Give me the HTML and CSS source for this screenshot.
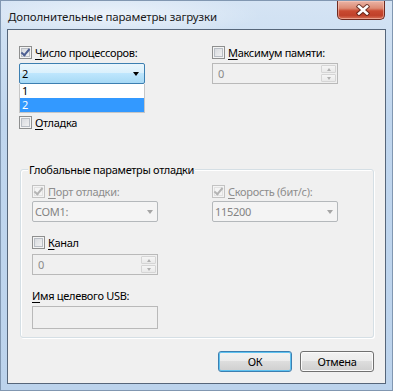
FILE: index.html
```html
<!DOCTYPE html>
<html lang="ru">
<head>
    <meta charset="UTF-8">
    <title>Дополнительные параметры загрузки</title>
    <link rel="stylesheet" href="styles.css">
</head>
<body>

    <div class="window">
        <div class="titlebar">
            <span class="title">Дополнительные параметры загрузки</span>
            <span class="close-btn">
                <svg width="14" height="12" viewBox="0 0 14 12">
                    <path d="M3 2.5 L11 9.5 M11 2.5 L3 9.5" stroke="#4a1a12" stroke-width="4.6" stroke-linecap="square" opacity="0.7"/>
                    <path d="M3 2.5 L11 9.5 M11 2.5 L3 9.5" stroke="#ffffff" stroke-width="2.6" stroke-linecap="square"/>
                </svg>
            </span>
        </div>

        <div class="client">
            <!-- верхняя часть: процессоры и память -->
            <div class="top-grid">
                <div class="col">
                    <label class="check-row">
                        <span class="check checked"></span>
                        <span><u>Ч</u>исло процессоров:</span>
                    </label>
                    <div class="combo-wrap">
                        <div class="combo open">
                            <span>2</span>
                            <span class="arrow"></span>
                        </div>
                        <ul class="droplist">
                            <li>1</li>
                            <li class="selected">2</li>
                        </ul>
                    </div>
                    <label class="check-row debug-row">
                        <span class="check"></span>
                        <span><u>О</u>тладка</span>
                    </label>
                </div>
                <div class="col">
                    <label class="check-row">
                        <span class="check"></span>
                        <span><u>М</u>аксимум памяти:</span>
                    </label>
                    <div class="spinner">
                        <span class="value">0</span>
                        <span class="spin">
                            <span class="spin-btn"><span class="tri up"></span></span>
                            <span class="spin-btn"><span class="tri down"></span></span>
                        </span>
                    </div>
                </div>
            </div>

            <!-- глобальные параметры отладки -->
            <div class="group">
                <span class="group-title">Глобальные параметры отладки</span>
                <div class="group-grid">
                    <div class="col">
                        <label class="check-row disabled">
                            <span class="check checked"></span>
                            <span><u>П</u>орт отладки:</span>
                        </label>
                        <div class="combo">
                            <span>COM1:</span>
                            <span class="arrow"></span>
                        </div>
                        <label class="check-row channel-row">
                            <span class="check"></span>
                            <span><u>К</u>анал</span>
                        </label>
                        <div class="spinner">
                            <span class="value">0</span>
                            <span class="spin">
                                <span class="spin-btn"><span class="tri up"></span></span>
                                <span class="spin-btn"><span class="tri down"></span></span>
                            </span>
                        </div>
                        <div class="field-label"><u>И</u>мя целевого USB:</div>
                        <div class="textbox"></div>
                    </div>
                    <div class="col">
                        <label class="check-row disabled">
                            <span class="check checked"></span>
                            <span><u>С</u>корость (бит/с):</span>
                        </label>
                        <div class="combo">
                            <span>115200</span>
                            <span class="arrow"></span>
                        </div>
                    </div>
                </div>
            </div>

            <div class="buttons">
                <button class="btn default">ОК</button>
                <button class="btn">Отмена</button>
            </div>
        </div>
    </div>

</body>
</html>
```

FILE: styles.css
```css
body {
    margin: 0;
    font-family: "Noto Sans", "Open Sans", sans-serif;
    font-size: 11px;
    letter-spacing: -0.3px;
    color: #000;
}
u {
    text-decoration-thickness: 1px;
    text-underline-offset: 2px;
}
.window {
    box-sizing: border-box;
    width: 393px;
    height: 391px;
    border: 1px solid #8197b1;
    background:
        radial-gradient(ellipse 150px 22px at 110px 14px, rgba(255, 255, 255, 0.55), rgba(255, 255, 255, 0) 100%),
        linear-gradient(#d5e4f4, #c0d6ee 30%, #bcd3ec 100%);
    display: flex;
    flex-direction: column;
}
.titlebar {
    height: 28px;
    display: flex;
    align-items: flex-start;
}
.title {
    padding: 8px 0 0 7px;
    line-height: 15px;
    font-size: 11.5px;
    letter-spacing: -0.15px;
    color: #1b1b1b;
}
.close-btn {
    margin-left: auto;
    margin-right: 7px;
    width: 48px;
    height: 19px;
    box-sizing: border-box;
    border: 1px solid #6e2a20;
    border-top: none;
    border-radius: 0 0 5px 5px;
    background: linear-gradient(#eab4a6 0%, #dd8b74 40%, #c94a31 55%, #c0412a 80%, #d8735a 100%);
    box-shadow: inset 0 0 0 1px rgba(255, 210, 195, 0.5);
    display: flex;
    align-items: center;
    justify-content: center;
    padding-left: 3px;
}
.client {
    flex: 1;
    margin: 0 6px 6px;
    border: 1px solid #56667a;
    background-color: #f0f0f0;
    padding: 15px 11px 0 11px;
}
.top-grid {
    display: grid;
    grid-template-columns: 193px auto;
}
.col {
    display: flex;
    flex-direction: column;
    align-items: flex-start;
}
.check-row {
    height: 15px;
    display: flex;
    align-items: center;
    gap: 3px;
    line-height: 15px;
    white-space: nowrap;
}
.check-row.disabled {
    color: #8d8d8d;
}
.check {
    width: 13px;
    height: 13px;
    flex-shrink: 0;
    box-sizing: border-box;
    border: 1px solid #8e8f8f;
    background: linear-gradient(135deg, #d2d5da, #f7f7f7);
    box-shadow: inset 0 0 0 1px #f4f4f4, inset 0 0 0 2px #b9bec5;
    display: flex;
    align-items: center;
    justify-content: center;
}
.check.checked::after {
    content: "";
    width: 3px;
    height: 7px;
    margin-top: -2px;
    border: solid #4d5f92;
    border-width: 0 2px 2px 0;
    transform: rotate(40deg);
}
.disabled .check {
    border-color: #c3c3c3;
    background: #f4f4f4;
    box-shadow: inset 0 0 0 1px #f4f4f4, inset 0 0 0 2px #e2e2e2;
}
.disabled .check.checked::after {
    border-color: #b4b4b4;
}
.combo-wrap {
    position: relative;
    margin-top: 3px;
}
.combo {
    box-sizing: border-box;
    width: 126px;
    height: 21px;
    border: 1px solid #b4b8bb;
    border-radius: 2px;
    background-color: #f4f4f4;
    color: #838383;
    display: flex;
    align-items: center;
    justify-content: space-between;
    padding: 0 4px 0 2px;
    margin-top: 2px;
}
.combo .arrow {
    width: 0;
    height: 0;
    border-left: 3.5px solid transparent;
    border-right: 3.5px solid transparent;
    border-top: 4px solid #a5a5a5;
}
.combo.open {
    margin-top: 0;
    border-color: #3c7fb1;
    color: #000;
    background: linear-gradient(#eaf6fd 0%, #d9f0fc 50%, #bee6fd 50%, #a7d9f5 100%);
    padding-left: 2px;
    padding-right: 5px;
}
.combo.open .arrow {
    border-top-color: #000;
}
.droplist {
    position: absolute;
    top: 21px;
    left: 0;
    width: 126px;
    box-sizing: border-box;
    margin: 0;
    padding: 0;
    list-style: none;
    background-color: #fff;
    border: 1px solid #c6c6c6;
    border-top: none;
}
.droplist li {
    height: 14px;
    line-height: 14px;
    padding-left: 2px;
}
.droplist li.selected {
    background-color: #3399ff;
    color: #fff;
}
.debug-row {
    margin-top: 31px;
}
.spinner {
    box-sizing: border-box;
    width: 126px;
    height: 21px;
    margin-top: 3px;
    border: 1px solid #b9b9b9;
    background-color: #f0f0f0;
    color: #8a8a8a;
    display: flex;
    align-items: center;
    justify-content: space-between;
    padding: 0 1px 0 5px;
}
.spin {
    display: flex;
    flex-direction: column;
    gap: 1px;
}
.spin-btn {
    width: 15px;
    height: 8px;
    box-sizing: border-box;
    border: 1px solid #d5d5d5;
    border-radius: 1px;
    background: linear-gradient(#f5f5f5, #e9e9e9);
    display: flex;
    align-items: center;
    justify-content: center;
}
.tri {
    width: 0;
    height: 0;
    border-left: 2.5px solid transparent;
    border-right: 2.5px solid transparent;
}
.tri.up {
    border-bottom: 3px solid #b0b0b0;
}
.tri.down {
    border-top: 3px solid #b0b0b0;
}
.group {
    position: relative;
    margin: 39px 0 0 1px;
    border: 1px solid #d5dfe5;
    border-radius: 3px;
    box-shadow: inset 1px 1px 0 #fff, 1px 1px 0 #fff;
    padding: 14px 0 8px 11px;
}
.group-title {
    position: absolute;
    top: -8px;
    left: 7px;
    padding: 0 1px;
    line-height: 15px;
    background-color: #f0f0f0;
}
.group-grid {
    display: grid;
    grid-template-columns: 180px auto;
}
.channel-row {
    margin-top: 13px;
}
.group .spinner {
    margin-top: 4px;
}
.field-label {
    margin-top: 13px;
    line-height: 15px;
}
.textbox {
    box-sizing: border-box;
    width: 126px;
    height: 23px;
    margin-top: 3px;
    border: 1px solid #b9b9b9;
    background-color: #f0f0f0;
}
.buttons {
    display: flex;
    justify-content: flex-end;
    gap: 8px;
    margin-top: 13px;
}
.btn {
    width: 74px;
    height: 21px;
    box-sizing: border-box;
    border: 1px solid #707070;
    border-radius: 3px;
    background: linear-gradient(#f2f2f2 0%, #ebebeb 50%, #dddddd 50%, #cfcfcf 100%);
    box-shadow: inset 0 0 0 1px #fbfbfb;
    font-family: inherit;
    font-size: 11px;
    letter-spacing: inherit;
    color: #000;
    padding: 0;
}
.btn.default {
    border-color: #3c7fb1;
    box-shadow: inset 0 0 0 1px #5fc2f0;
}
```
